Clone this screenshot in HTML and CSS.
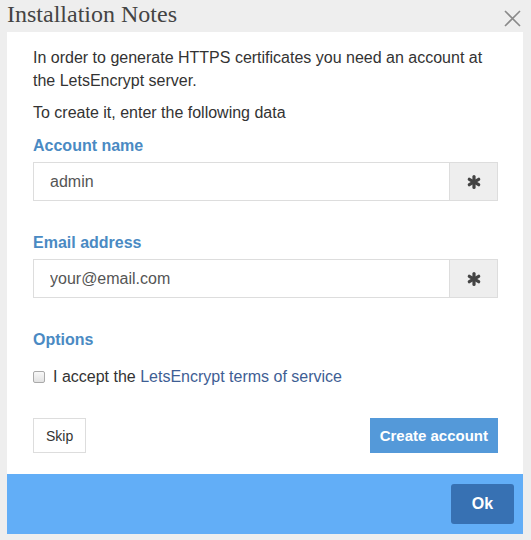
FILE: index.html
```html
<!DOCTYPE html>
<html>
<head>
<meta charset="utf-8">
<link rel="stylesheet" href="styles.css">
</head>
<body>
<div class="header">
  <h1 class="title">Installation Notes</h1>
  <button class="close" aria-label="Close">
    <svg width="17" height="17" viewBox="0 0 17 17"><path d="M1 1L16 16M16 1L1 16" stroke="#8a8a8a" stroke-width="1.6" fill="none"/></svg>
  </button>
</div>
<div class="panel">
  <div class="body">
    <p class="text">In order to generate HTTPS certificates you need an account at the LetsEncrypt server.</p>
    <p class="text second">To create it, enter the following data</p>
    <label class="label first">Account name</label>
    <div class="field">
      <input class="input" type="text" value="admin">
      <span class="addon"><svg width="14" height="14" viewBox="0 0 14 14"><g stroke="#444" stroke-width="3.2" stroke-linecap="round"><path d="M7 1.6V12.4"/><path d="M2.3 4.3L11.7 9.7"/><path d="M2.3 9.7L11.7 4.3"/></g></svg></span>
    </div>
    <label class="label">Email address</label>
    <div class="field">
      <input class="input" type="text" value="your@email.com">
      <span class="addon"><svg width="14" height="14" viewBox="0 0 14 14"><g stroke="#444" stroke-width="3.2" stroke-linecap="round"><path d="M7 1.6V12.4"/><path d="M2.3 4.3L11.7 9.7"/><path d="M2.3 9.7L11.7 4.3"/></g></svg></span>
    </div>
    <div class="label">Options</div>
    <label class="check"><span class="box"></span>I accept the&nbsp;<a class="link" href="#">LetsEncrypt terms of service</a></label>
    <div class="actions">
      <button class="btn skip">Skip</button>
      <button class="btn create">Create account</button>
    </div>
  </div>
  <div class="footer">
    <button class="ok">Ok</button>
  </div>
</div>
</body>
</html>
```
FILE: styles.css
```css
html, body {
  margin: 0;
  padding: 0;
  background: #eeeeee;
  height: 540px;
  overflow: hidden;
}
body {
  font-family: "Liberation Sans", Arial, sans-serif;
  color: #333;
}
.header {
  height: 32px;
  display: flex;
  justify-content: space-between;
  align-items: flex-start;
  padding: 0 8px 0 7px;
}
.title {
  margin: 0;
  font-family: "Liberation Serif", "Times New Roman", serif;
  font-weight: normal;
  font-size: 24px;
  line-height: 28px;
  color: #444;
}
.close {
  border: 0;
  background: none;
  padding: 0;
  margin: 10px 2px 0 0;
  width: 17px;
  height: 17px;
  display: flex;
}
.panel {
  margin: 0 8px 0 7px;
  background: #fff;
}
.body {
  padding: 14px 25px 21px 26px;
}
.text {
  margin: 0;
  font-size: 16px;
  line-height: 23px;
}
.text.second {
  margin-top: 10px;
  line-height: 22px;
}
.label {
  display: block;
  margin-top: 31px;
  font-size: 16px;
  font-weight: bold;
  line-height: 22px;
  color: #4a8ac3;
}
.label.first {
  margin-top: 11px;
}
.field {
  display: flex;
  margin-top: 5px;
  height: 39px;
}
.input {
  flex: 1;
  min-width: 0;
  box-sizing: border-box;
  height: 39px;
  border: 1px solid #dddddd;
  border-right: 0;
  padding: 0 16px;
  font-family: "Liberation Sans", Arial, sans-serif;
  font-size: 16px;
  color: #555;
  outline: none;
}
.addon {
  width: 49px;
  box-sizing: border-box;
  height: 39px;
  background: #eeeeee;
  border: 1px solid #dddddd;
  display: flex;
  align-items: center;
  justify-content: center;
}
.check {
  display: flex;
  align-items: center;
  margin-top: 15px;
  font-size: 16px;
  line-height: 22px;
  color: #333;
}
.box {
  width: 10px;
  height: 10px;
  border: 1px solid #aaa;
  border-radius: 2px;
  background: linear-gradient(#f8f8f8, #e2e2e2);
  margin-right: 8px;
}
.link {
  color: #3e5e94;
  text-decoration: none;
}
.actions {
  display: flex;
  justify-content: space-between;
  margin-top: 30px;
}
.btn {
  height: 35px;
  box-sizing: border-box;
  font-family: "Liberation Sans", Arial, sans-serif;
  font-size: 14px;
  padding: 0 12px;
  border-radius: 0;
}
.skip {
  background: #fff;
  border: 1px solid #dddddd;
  color: #333;
}
.create {
  background: #5499d9;
  border: 1px solid #5499d9;
  color: #fff;
  font-size: 15px;
  font-weight: bold;
  padding: 0 9px;
}
.footer {
  height: 60px;
  background: #62aef7;
  display: flex;
  justify-content: flex-end;
  align-items: flex-start;
  padding: 10px 9px 0 0;
  box-sizing: border-box;
}
.ok {
  width: 63px;
  height: 40px;
  background: #3771b3;
  border: 0;
  border-radius: 3px;
  color: #fff;
  font-family: "Liberation Sans", Arial, sans-serif;
  font-size: 16px;
  font-weight: bold;
}
```
